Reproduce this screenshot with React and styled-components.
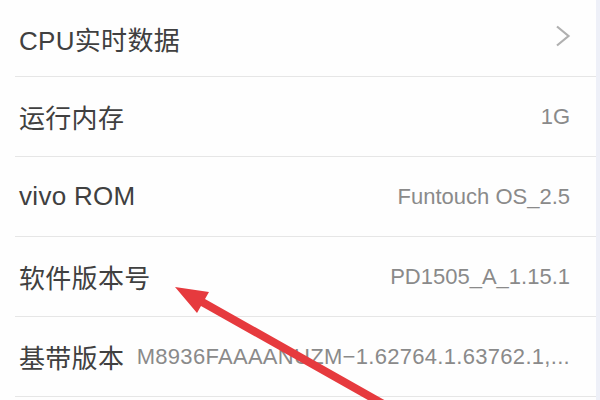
import React from "react";
import styled, { createGlobalStyle } from "styled-components";

const Global = createGlobalStyle`
  html, body { margin: 0; padding: 0; background: #fff; }
  body { font-family: "Liberation Sans", "Noto Sans CJK SC", sans-serif; }
`;

const Screen = styled.div`
  position: relative;
  width: 600px;
  height: 400px;
  overflow: hidden;
  display: flex;
  background: #fefefe;
`;

const List = styled.div`
  flex: 1;
  display: flex;
  flex-direction: column;
`;

const Strip = styled.div`
  width: 4px;
  background: #eef0f8;
`;

const Row = styled.div`
  flex: none;
  height: ${(p) => (p.$first ? 76 : 79)}px;
  margin-left: 15px;
  padding: 0 26px 0 4px;
  border-bottom: 1px solid #e6e6e6;
  display: flex;
  align-items: center;
  gap: 12px;
  box-sizing: content-box;
`;

const Label = styled.span`
  flex: none;
  font-size: 26px;
  color: #404040;
  font-family: "Liberation Sans", "Noto Sans CJK SC", sans-serif;
  letter-spacing: 0.3px;
`;

const Value = styled.span`
  margin-left: auto;
  font-size: 22px;
  color: #8a8a8a;
  white-space: nowrap;
  overflow: hidden;
  letter-spacing: ${(p) => (p.$wide ? "0.3px" : "0")};
`;

const Chevron = styled.svg`
  margin-left: auto;
  width: 16px;
  height: 22px;
  margin-right: -1px;
  margin-top: -4px;
`;

const Overlay = styled.svg`
  position: absolute;
  left: 0;
  top: 0;
  pointer-events: none;
`;

const rows = [
  { label: "运行内存", value: "1G" },
  { label: "vivo ROM", value: "Funtouch OS_2.5" },
  { label: "软件版本号", value: "PD1505_A_1.15.1" },
  { label: "基带版本", value: "M8936FAAAANUZM−1.62764.1.63762.1,...", wide: true },
];

export default function App() {
  return (
    <>
      <Global />
      <Screen>
        <List>
          <Row $first>
            <Label>CPU实时数据</Label>
            <Chevron viewBox="0 0 16 22">
              <polyline points="2,1.5 13.5,11 2,20.5" fill="none" stroke="#b0b0b0" strokeWidth="2.2" />
            </Chevron>
          </Row>
          {rows.map((r) => (
            <Row key={r.label}>
              <Label>{r.label}</Label>
              <Value $wide={r.wide}>{r.value}</Value>
            </Row>
          ))}
        </List>
        <Strip />
        <Overlay width="600" height="400" viewBox="0 0 600 400">
          <polygon
            points="175,287 209,292 205,299 387,401.5 383,408.5 201,306 197,313"
            fill="#e63a3e"
          />
        </Overlay>
      </Screen>
    </>
  );
}
